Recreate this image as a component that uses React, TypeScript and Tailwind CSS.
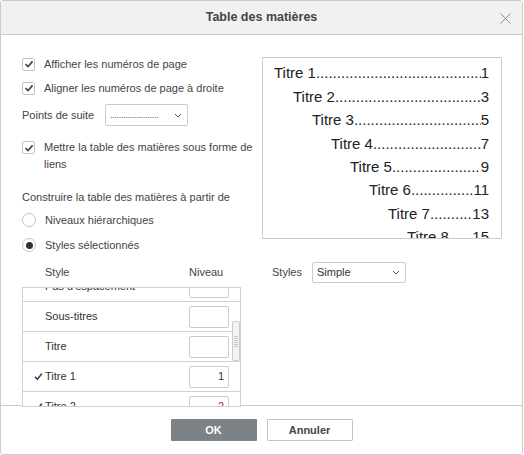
import React from "react";

const font = { fontFamily: '"Liberation Sans", Arial, sans-serif' };

const Check = ({ className = "" }: { className?: string }) => (
  <svg viewBox="0 0 10 10" className={className}>
    <path d="M1.5 5.2 L4 7.6 L8.6 2.4" fill="none" stroke="#444" strokeWidth="1.6" />
  </svg>
);

const Checkbox = () => (
  <span className="flex h-[13px] w-[13px] shrink-0 items-center justify-center rounded-[2px] border border-[#c4c4c4] bg-white">
    <Check className="h-[10px] w-[10px]" />
  </span>
);

const Radio = ({ on }: { on?: boolean }) => (
  <span className="flex h-[14px] w-[14px] shrink-0 items-center justify-center rounded-full border border-[#c4c4c4] bg-white">
    {on && <span className="h-[7px] w-[7px] rounded-full bg-[#333]" />}
  </span>
);

const Chevron = () => (
  <svg viewBox="0 0 8 5" className="h-[5px] w-[8px]">
    <path d="M1 1 L4 4 L7 1" fill="none" stroke="#555" strokeWidth="1" />
  </svg>
);

const preview = [
  ["Titre 1", "1"],
  ["Titre 2", "3"],
  ["Titre 3", "5"],
  ["Titre 4", "7"],
  ["Titre 5", "9"],
  ["Titre 6", "11"],
  ["Titre 7", "13"],
  ["Titre 8", "15"],
];

const indents = ["pl-0", "pl-[19px]", "pl-[38px]", "pl-[57px]", "pl-[76px]", "pl-[95px]", "pl-[114px]", "pl-[133px]"];

const rows: { name: string; level: string; checked?: boolean; red?: boolean }[] = [
  { name: "Pas d'espacement", level: "" },
  { name: "Sous-titres", level: "" },
  { name: "Titre", level: "" },
  { name: "Titre 1", level: "1", checked: true },
  { name: "Titre 2", level: "2", checked: true, red: true },
];

export default function App() {
  return (
    <div style={font} className="h-[455px] w-[524px] bg-white text-[11px] text-[#444]">
      <div className="flex h-[455px] w-[523px] flex-col rounded-[3px] border border-[#cbcbcb] bg-white">
        {/* header */}
        <div className="relative flex h-[34px] shrink-0 items-center justify-center border-b border-[#cbcbcb] bg-[#f1f1f1]">
          <span className="text-[12.5px] font-bold text-[#444]">Table des matières</span>
          <svg viewBox="0 0 11 11" className="absolute right-[11px] top-[12px] h-[11px] w-[11px]">
            <path d="M0.5 0.5 L10.5 10.5 M10.5 0.5 L0.5 10.5" stroke="#8a8a8a" strokeWidth="1" />
          </svg>
        </div>

        {/* body */}
        <div className="h-[370px] shrink-0 pt-[19px]">
          <div className="flex">
            <div className="w-[258px] shrink-0 pl-[21px]">
              <label className="flex h-[20px] items-center gap-[9px]">
                <Checkbox />
                <span>Afficher les numéros de page</span>
              </label>
              <label className="mt-[4px] flex h-[20px] items-center gap-[9px]">
                <Checkbox />
                <span>Aligner les numéros de page à droite</span>
              </label>
              <div className="mt-[6px] flex h-[22px] items-center">
                <span className="w-[83px]">Points de suite</span>
                <div className="flex h-[22px] w-[83px] items-center justify-between rounded-[2px] border border-[#cbcbcb] pl-[4px] pr-[5px]">
                  <span className="text-[9px] leading-none tracking-[-0.3px] text-[#555]">......................</span>
                  <Chevron />
                </div>
              </div>
              <label className="mt-[13px] flex gap-[9px]">
                <span className="mt-[2px]">
                  <Checkbox />
                </span>
                <span className="leading-[17px]">
                  Mettre la table des matières sous forme de liens
                </span>
              </label>
              <div className="mt-[14px] flex h-[20px] items-center">Construire la table des matières à partir de</div>
              <label className="mt-[3px] flex h-[20px] items-center gap-[9px]">
                <Radio />
                <span>Niveaux hiérarchiques</span>
              </label>
              <label className="mt-[5px] flex h-[20px] items-center gap-[9px]">
                <Radio on />
                <span>Styles sélectionnés</span>
              </label>
            </div>

            <div className="ml-[3px] mt-[3px] h-[182px] w-[240px] overflow-hidden border border-[#cbcbcb] pl-[11px] pr-[12px] pt-[4px] text-[15px] text-[#222]">
              {preview.map(([t, n], i) => (
                <div key={t} className={`flex h-[23.4px] items-center whitespace-nowrap ${indents[i]}`}>
                  <span>{t}</span>
                  <span className="min-w-0 flex-1 overflow-hidden text-clip">
                    ..........................................................
                  </span>
                  <span>{n}</span>
                </div>
              ))}
            </div>
          </div>

          {/* styles list */}
          <div className="mt-[7px] flex h-[21px] items-center">
            <span className="ml-[44px] w-[144px]">Style</span>
            <span className="w-[83px]">Niveau</span>
            <span className="w-[40px]">Styles</span>
            <div className="flex h-[21px] w-[94px] items-center justify-between rounded-[2px] border border-[#cbcbcb] pl-[4px] pr-[5px] text-[#333]">
              <span>Simple</span>
              <Chevron />
            </div>
          </div>

          <div className="relative ml-[21px] mt-[4px] h-[120px] w-[219px] overflow-hidden border border-[#d0d0d0] bg-white">
            <div className="-mt-[16px]">
              {rows.map((r) => (
                <div key={r.name} className="flex h-[30px] items-center border-b border-[#d0d0d0]">
                  <span className="flex w-[22px] justify-end pr-[2px]">
                    {r.checked && (
                      <svg viewBox="0 0 10 10" className="h-[9px] w-[9px]">
                        <path d="M1.2 5.4 L3.8 8 L8.8 1.8" fill="none" stroke="#333" strokeWidth="1.7" />
                      </svg>
                    )}
                  </span>
                  <span className="w-[144px] text-[#333]">{r.name}</span>
                  <span
                    className={`flex h-[22px] w-[40px] items-center justify-end rounded-[2px] border border-[#cbcbcb] pr-[4px] ${
                      r.red ? "text-[#b3261e]" : "text-[#333]"
                    }`}
                  >
                    {r.level}
                  </span>
                </div>
              ))}
            </div>
            <div className="absolute left-[209px] top-[33px] flex h-[40px] w-[8px] flex-col items-center justify-center gap-[1px] rounded-[2px] border border-[#cbcbcb] bg-[#f3f3f3]">
              {[0, 1, 2, 3, 4, 5].map((k) => (
                <span key={k} className="h-px w-[4px] bg-[#c4c4c4]" />
              ))}
            </div>
          </div>
        </div>

        {/* footer */}
        <div className="flex flex-1 justify-center gap-[10px] border-t border-[#cbcbcb] pt-[13px]">
          <button className="h-[22px] w-[86px] rounded-[1px] bg-[#7d8288] text-[11px] font-bold text-white">OK</button>
          <button className="h-[22px] w-[86px] rounded-[1px] border border-[#c4c4c4] bg-white text-[11px] font-bold text-[#444]">
            Annuler
          </button>
        </div>
      </div>
    </div>
  );
}
